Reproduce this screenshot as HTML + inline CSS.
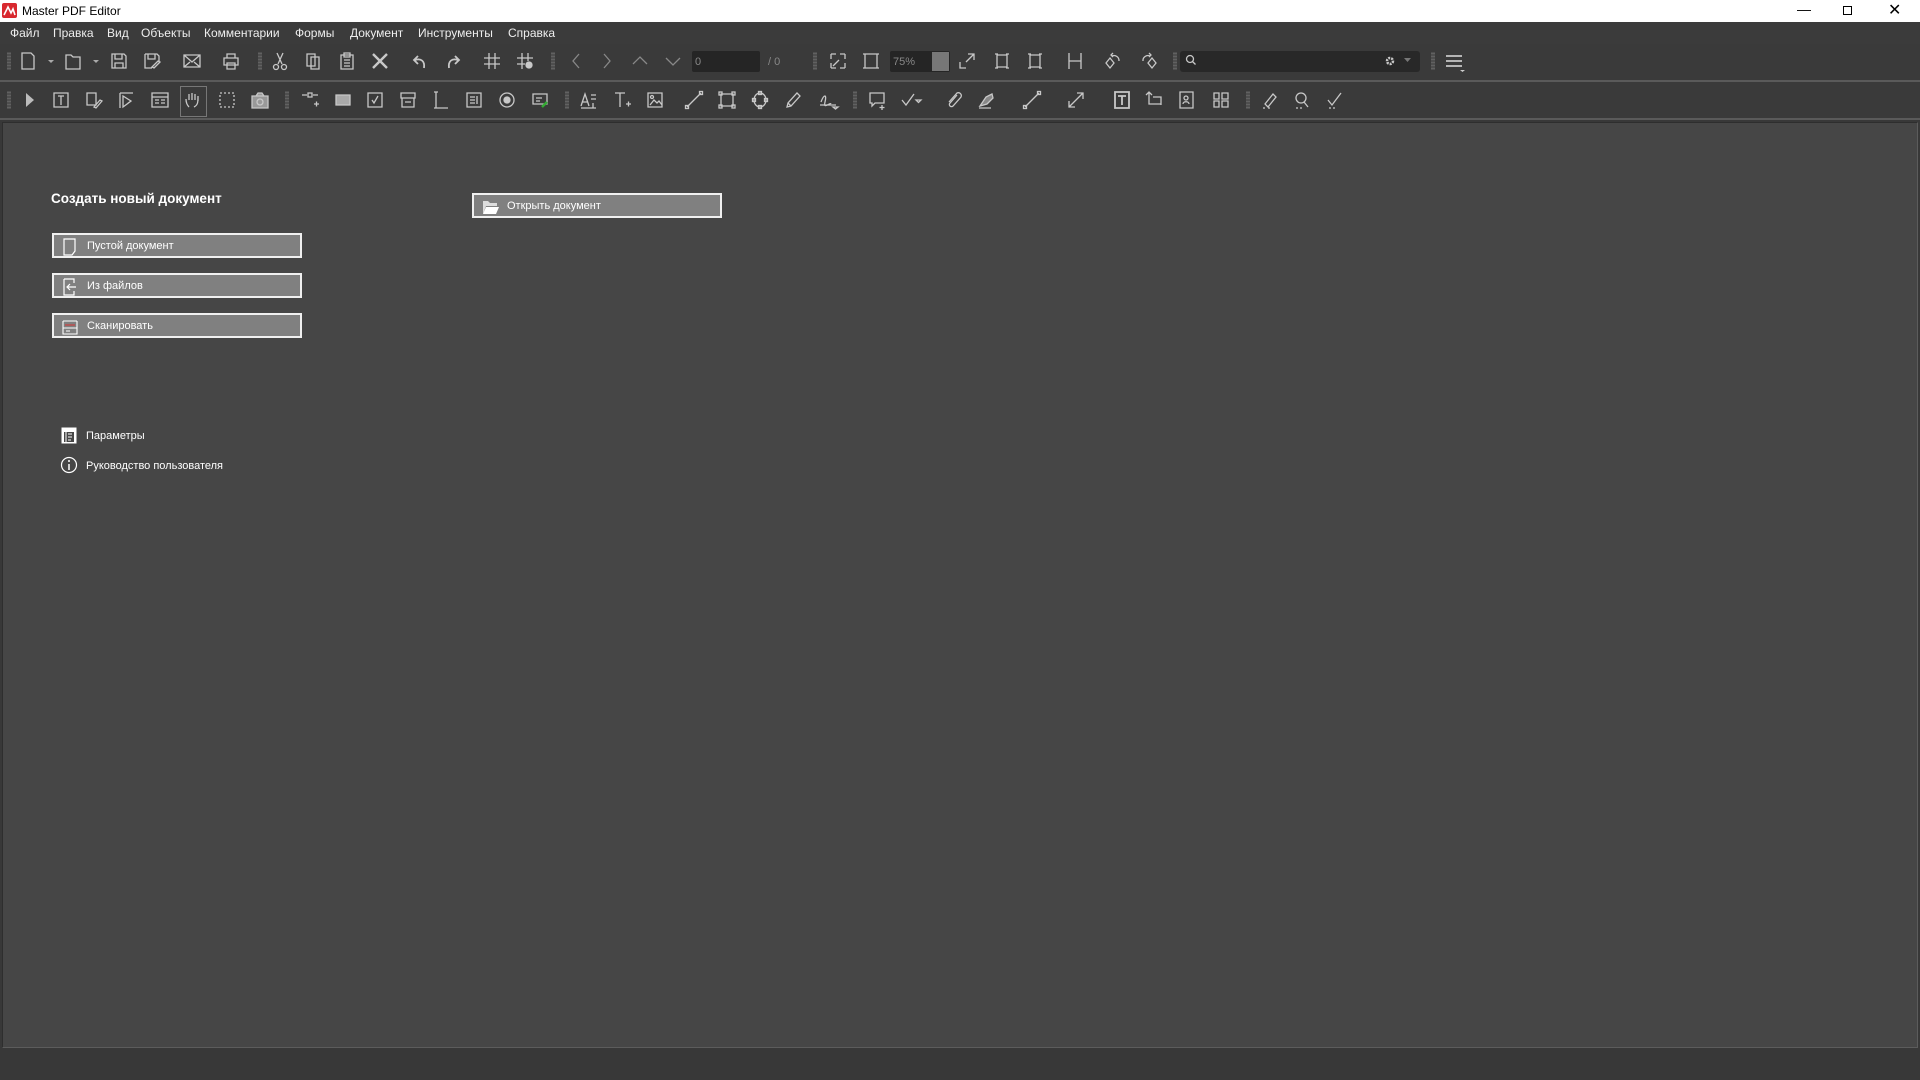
<!DOCTYPE html>
<html><head><meta charset="utf-8"><style>
*{margin:0;padding:0;box-sizing:border-box}
body{width:1920px;height:1080px;background:#383838;font-family:"Liberation Sans","DejaVu Sans",sans-serif;position:relative;overflow:hidden;color:#e6e6e6}
.a{position:absolute}
#title{left:0;top:0;width:1920px;height:22px;background:#fff;color:#000;font-size:12px}
#menu{left:0;top:22px;width:1920px;height:22px;background:#3b3b3b;font-size:12px;color:#eee}
#menu span{position:absolute;top:4px}
.tb{left:0;width:1920px;background:#3a3a3a;border-bottom:2px solid #5a5a5a}
.grip{width:4px;height:18px;background-image:radial-gradient(#888 45%,transparent 50%);background-size:2px 3px}
svg.i{position:absolute;width:20px;height:20px;overflow:visible}
svg.i *{fill:none;stroke:#c8c8c8;stroke-width:1.3}
#main{left:2px;top:122px;width:1916px;height:926px;background:#464646;border:1px solid #5c5c5c;border-top-color:#2e2e2e;border-left-color:#2e2e2e}
.btn{position:absolute;width:250px;height:25px;background:#808080;border:2px solid #f0f0f0;font-size:11px;color:#fff}
.btn span{position:absolute;left:33px;top:5px}
.btn svg{position:absolute;left:8px;top:3px}
.lnk{position:absolute;font-size:11px;color:#fff}
</style></head><body>
<div id="title" class="a">
<div class="a" style="left:2px;top:3px;width:15px;height:15px;background:#d8292f;border-radius:2px"></div>
<svg class="a" style="left:3px;top:5px" width="13" height="11"><path d="M1 10 L5 2 L8 8 L10 4 L12 10" stroke="#fff" stroke-width="1.6" fill="none"/></svg>
<span class="a" style="left:22px;top:4px">Master PDF Editor</span>
<span class="a" style="left:1797px;top:1px;font-size:14px">&#8212;</span>
<div class="a" style="left:1843px;top:6px;width:9px;height:9px;border:1px solid #000"></div>
<span class="a" style="left:1888px;top:0px;font-size:16px">&#10005;</span>
</div>
<div id="menu" class="a">
<span style="left:10px">Файл</span><span style="left:53px">Правка</span><span style="left:107px">Вид</span><span style="left:141px">Объекты</span><span style="left:204px">Комментарии</span><span style="left:295px">Формы</span><span style="left:350px">Документ</span><span style="left:418px">Инструменты</span><span style="left:508px">Справка</span>
</div>
<div class="a tb" style="top:44px;height:38px"></div>
<div class="a tb" style="top:82px;height:38px"></div>
<div class="a grip" style="left:7px;top:52px"></div><div class="a grip" style="left:258px;top:52px"></div><div class="a grip" style="left:551px;top:52px"></div><div class="a grip" style="left:813px;top:52px"></div><div class="a grip" style="left:1173px;top:52px"></div><div class="a grip" style="left:1431px;top:52px"></div>
<div class="a grip" style="left:7px;top:91px"></div><div class="a grip" style="left:285px;top:91px"></div><div class="a grip" style="left:565px;top:91px"></div><div class="a grip" style="left:853px;top:91px"></div><div class="a grip" style="left:1246px;top:91px"></div>
<svg class="i" style="left:18px;top:51px"><path d="M4 2h9l3 3v13H4z" stroke="#fff"/></svg>
<svg class="i" style="left:45px;top:51px"><path d="M3 9h6l-3 3z" style="fill:#aaa;stroke:none"/></svg>
<svg class="i" style="left:63px;top:51px"><path d="M3 4h5l2 2h7v12H3z" stroke="#fff"/></svg>
<svg class="i" style="left:90px;top:51px"><path d="M3 9h6l-3 3z" style="fill:#aaa;stroke:none"/></svg>
<svg class="i" style="left:109px;top:51px"><path d="M3 3h12l2 2v12H3zM6 3v5h7V3M6 17v-5h8v5"/></svg>
<svg class="i" style="left:142px;top:51px"><path d="M3 3h12l2 2v5M3 3v14h7M6 3v5h7V3M12 17l6-6-2-1-6 6z"/></svg>
<svg class="i" style="left:182px;top:51px"><path d="M2 4h16v12H2zM2 4l8 7 8-7M2 16l6-5M18 16l-6-5"/></svg>
<svg class="i" style="left:221px;top:51px"><path d="M6 3h8v4H6zM3 7h14v7H3zM6 12h8v6H6z"/></svg>
<svg class="i" style="left:270px;top:51px"><path d="M7 2l5 11M13 2L8 13"/><circle cx="6" cy="16" r="2.5"/><circle cx="14" cy="16" r="2.5"/></svg>
<svg class="i" style="left:303px;top:51px"><path d="M4 3h8v12H4zM8 6h8v12H8z"/></svg>
<svg class="i" style="left:337px;top:51px"><path d="M4 4h12v14H4zM7 2h6v4H7zM7 9h6M7 12h6M7 15h6"/></svg>
<svg class="i" style="left:370px;top:51px"><path d="M3 3l14 14M17 3L3 17" style="stroke-width:2.4"/></svg>
<svg class="i" style="left:410px;top:51px"><path d="M14 17c1-7-3-10-9-8M8 5L4 9l4 4" style="stroke-width:1.8"/></svg>
<svg class="i" style="left:443px;top:51px"><path d="M6 17c-1-7 3-10 9-8M12 5l4 4-4 4" style="stroke-width:1.8"/></svg>
<svg class="i" style="left:482px;top:51px"><path d="M7 2v16M13 2v16M2 7h16M2 13h16"/></svg>
<svg class="i" style="left:515px;top:51px"><path d="M7 2v16M13 2v8M2 7h16M2 13h8"/><circle cx="14" cy="14" r="3" style="fill:#c8c8c8"/></svg>
<svg class="i" style="left:566px;top:51px"><path d="M13 3l-6 7 6 7" style="stroke:#888"/></svg>
<svg class="i" style="left:597px;top:51px"><path d="M7 3l6 7-6 7" style="stroke:#888"/></svg>
<svg class="i" style="left:630px;top:51px"><path d="M3 13l7-7 7 7" style="stroke:#888"/></svg>
<svg class="i" style="left:663px;top:51px"><path d="M3 7l7 7 7-7" style="stroke:#888"/></svg>
<div class="a" style="left:692px;top:51px;width:68px;height:21px;background:#252525;border-radius:2px;font-size:11px;color:#888;padding:5px 3px">0</div>
<span class="a" style="left:768px;top:56px;font-size:11px;color:#888">/ 0</span>
<svg class="i" style="left:828px;top:51px"><path d="M3 3h5M3 3v5M17 3h-5M17 3v5M3 17h5M3 17v-5M17 17h-5M17 17v-5M5 15l6-6"/></svg>
<svg class="i" style="left:861px;top:51px"><path d="M4 3h12v14H4zM2 3h4M2 17h4M14 3h4M14 17h4"/></svg>
<div class="a" style="left:890px;top:51px;width:60px;height:21px;background:#252525;border-radius:2px;font-size:11px;color:#888;padding:5px 3px">75%</div>
<div class="a" style="left:932px;top:52px;width:17px;height:19px;background:#777"></div>
<svg class="i" style="left:957px;top:51px"><path d="M3 11v6h6M11 3h6v6M9 11l8-8"/></svg>
<svg class="i" style="left:992px;top:51px"><path d="M5 4h10v12H5zM3 3h3M3 17h3M14 3h3M14 17h3"/></svg>
<svg class="i" style="left:1025px;top:51px"><path d="M5 4h10v12H5zM3 3h3M3 17h3M14 3h3M14 17h3"/></svg>
<svg class="i" style="left:1065px;top:51px"><path d="M4 2v16M16 2v16M4 10h12"/></svg>
<svg class="i" style="left:1103px;top:51px"><path d="M3 12l4-5 4 5-4 5zM9 5a5 5 0 0 1 7 5M10 2L8 4l2 2"/></svg>
<svg class="i" style="left:1139px;top:51px"><path d="M9 12l4-5 4 5-4 5zM11 5a5 5 0 0 0-7 5M10 2l2 2-2 2"/></svg>
<div class="a" style="left:1180px;top:51px;width:240px;height:21px;background:#282828;border-radius:3px"></div>
<svg class="i" style="left:1184px;top:53px;width:16px;height:16px"><circle cx="6" cy="6" r="3.5"/><path d="M8.5 8.5l3 3"/></svg>
<svg class="i" style="left:1382px;top:53px;width:16px;height:16px"><circle cx="8" cy="8" r="3" style="stroke-width:2.5;stroke-dasharray:2 1"/></svg>
<svg class="i" style="left:1403px;top:56px;width:10px;height:10px"><path d="M1 2h7l-3.5 4z" style="fill:#777;stroke:none"/></svg>
<svg class="i" style="left:1444px;top:51px"><path d="M2 5h16M2 10h16M2 15h16" style="stroke:#fff"/><path d="M16 19h5l-2.5 2z" style="fill:#ccc;stroke:none"/></svg>
<svg class="i" style="left:20px;top:90px"><path d="M6 3v14l8-7z" style="fill:#bbb;stroke:none"/></svg>
<svg class="i" style="left:51px;top:90px"><path d="M3 3h14v14H3zM7 6h6M10 6v9M3 3v14"/></svg>
<svg class="i" style="left:84px;top:90px"><path d="M3 3h9v12H3zM10 17l6-7 2 1-6 7z"/></svg>
<svg class="i" style="left:117px;top:90px"><path d="M3 3v15M3 3h13M6 6v11l8-6z"/></svg>
<svg class="i" style="left:150px;top:90px"><path d="M2 3h16v14H2zM2 7h16M5 10h4M11 10h4M5 13h4M11 13h4"/></svg>
<div class="a" style="left:180px;top:86px;width:27px;height:31px;border:1px solid #777"></div>
<svg class="i" style="left:183px;top:90px"><path d="M6 17c-3-3-3-6-3-8M6 10V4M9 10V3M12 10V4M15 11V6c0 6 0 9-4 11"/></svg>
<svg class="i" style="left:217px;top:90px"><path d="M3 3h14v14H3z" style="stroke-dasharray:2 2"/></svg>
<svg class="i" style="left:250px;top:90px"><path d="M2 6h16v12H2zM6 6l2-3h4l2 3" style="fill:#999"/><circle cx="10" cy="12" r="3"/></svg>
<svg class="i" style="left:300px;top:90px"><path d="M2 5h5M13 5h5M8 3h4v4H8zM14 14h5M16.5 11.5v5"/></svg>
<svg class="i" style="left:333px;top:90px"><path d="M3 5h14v10H3z" style="fill:#aaa"/></svg>
<svg class="i" style="left:365px;top:90px"><path d="M3 3h14v14H3zM7 10l2 3 4-7"/></svg>
<svg class="i" style="left:398px;top:90px"><path d="M3 3h14v5H3zM4 8v9h12V8M7 12h6"/></svg>
<svg class="i" style="left:431px;top:90px"><path d="M5 2v16h12M3 2h4M3 18h4"/></svg>
<svg class="i" style="left:464px;top:90px"><path d="M3 3h14v14H3zM6 7h5M6 10h5M6 13h5M13 6v8"/></svg>
<svg class="i" style="left:497px;top:90px"><circle cx="10" cy="10" r="7"/><circle cx="10" cy="10" r="3" style="fill:#c8c8c8"/></svg>
<svg class="i" style="left:530px;top:90px"><path d="M3 4h14v10H3zM6 8h6M6 11h4"/><path d="M12 17l5-5" style="stroke:#3a3;stroke-width:2.5"/></svg>
<svg class="i" style="left:578px;top:90px"><path d="M3 16l4-12 4 12M4 12h6M13 5h5M13 9h5M3 18h15M15 13v5"/></svg>
<svg class="i" style="left:612px;top:90px"><path d="M3 3h10M8 3v14M14 14h5M16.5 11.5v5"/></svg>
<svg class="i" style="left:645px;top:90px"><path d="M3 3h14v14H3zM5 15l4-5 3 3 2-2 3 4"/><circle cx="7" cy="7" r="1.5"/></svg>
<svg class="i" style="left:684px;top:90px"><path d="M3 17L17 3"/><rect x="1.5" y="15.5" width="3" height="3"/><rect x="15.5" y="1.5" width="3" height="3"/></svg>
<svg class="i" style="left:717px;top:90px"><path d="M4 4h12v12H4z"/><rect x="2" y="2" width="3" height="3"/><rect x="15" y="2" width="3" height="3"/><rect x="2" y="15" width="3" height="3"/><rect x="15" y="15" width="3" height="3"/></svg>
<svg class="i" style="left:750px;top:90px"><ellipse cx="10" cy="10" rx="6" ry="7"/><rect x="8.5" y="1.5" width="3" height="3"/><rect x="8.5" y="15.5" width="3" height="3"/><rect x="2.5" y="8.5" width="3" height="3"/><rect x="14.5" y="8.5" width="3" height="3"/></svg>
<svg class="i" style="left:783px;top:90px"><path d="M4 17l1-4 9-10 3 3-9 10zM5 13l3 3"/></svg>
<svg class="i" style="left:818px;top:90px"><path d="M3 12c3-8 6-8 4 0s5 0 6 2M2 15h16M15 17h5l-2.5 2z"/></svg>
<svg class="i" style="left:867px;top:90px"><path d="M3 3h14v10H8l-3 3v-3H3zM15 15v5M12.5 17.5h5"/></svg>
<svg class="i" style="left:899px;top:90px"><path d="M3 10l4 5 8-11M17 10h5l-2.5 2.5z"/></svg>
<svg class="i" style="left:944px;top:90px"><path d="M13 5l-7 8a2 2 0 0 0 3 3l8-9a3 3 0 0 0-4-4L5 12"/></svg>
<svg class="i" style="left:977px;top:90px"><path d="M3 16l6-9 6-3 1 4-6 6zM2 18h12" style="fill:#888"/></svg>
<svg class="i" style="left:1022px;top:90px"><path d="M3 17L17 3"/><rect x="1.5" y="15.5" width="3" height="3"/><rect x="15.5" y="1.5" width="3" height="3"/></svg>
<svg class="i" style="left:1066px;top:90px"><path d="M3 17L17 3M11 3h6v6M3 11v6h6"/></svg>
<svg class="i" style="left:1112px;top:90px"><path d="M3 2h14v16H3zM6 6h8M10 6v9" style="stroke-width:1.8"/></svg>
<svg class="i" style="left:1145px;top:90px"><path d="M4 2v12h12M1 5l3-3 3 3M8 7h8v8"/></svg>
<svg class="i" style="left:1177px;top:90px"><path d="M3 2h13v16H3z"/><circle cx="9" cy="8" r="2"/><path d="M6 14c0-3 6-3 6 0"/></svg>
<svg class="i" style="left:1211px;top:90px"><path d="M3 3h5v6H3zM11 3h6v6h-6zM3 11h5v6H3zM11 11h6v6h-6z"/></svg>
<svg class="i" style="left:1260px;top:90px"><path d="M5 14l8-10 3 3-8 10zM3 18h2M8 18h2"/></svg>
<svg class="i" style="left:1292px;top:90px"><circle cx="9" cy="8" r="5"/><path d="M12 12l4 5M4 18h2M8 18h2"/></svg>
<svg class="i" style="left:1325px;top:90px"><path d="M3 10l4 5 9-12M4 18h2M8 18h2"/></svg>
<div id="main" class="a"></div>
<div class="a" style="left:51px;top:191px;font-size:13.5px;font-weight:bold;color:#fff">Создать новый документ</div>
<div class="btn" style="left:52px;top:233px"><svg width="16" height="18"><path d="M2 1h11v12l-3 4H2z" stroke="#fff" fill="none" stroke-width="1.2"/></svg><span>Пустой документ</span></div>
<div class="btn" style="left:52px;top:273px"><svg width="16" height="18"><path d="M2 1h10v4M2 1v16h10v-4M14 9H6M8 6L5 9l3 3" stroke="#fff" fill="none" stroke-width="1.2"/></svg><span>Из файлов</span></div>
<div class="btn" style="left:52px;top:313px"><svg width="16" height="18"><path d="M1 3h14M1 3v13h14V3M1 10h14M4 13h4" stroke="#fff" fill="none" stroke-width="1.1"/><path d="M3 7h10" stroke="#d33" stroke-width="1"/></svg><span>Сканировать</span></div>
<div class="btn" style="left:472px;top:193px"><svg width="18" height="18"><path d="M1 3h5l2 2h7v3H4L1 16z" fill="#ddd"/><path d="M4 9h13l-3 7H1z" fill="#fff"/></svg><span>Открыть документ</span></div>
<svg class="a" style="left:61px;top:427px" width="16" height="17"><rect x="0.5" y="0.5" width="15" height="16" fill="#fff"/><rect x="3" y="5" width="10" height="10" fill="#464646"/><path d="M5 5v10M7 7h4M7 10h4M7 13h3" stroke="#fff" stroke-width="1"/></svg>
<span class="lnk" style="left:86px;top:430px">Параметры</span>
<svg class="a" style="left:60px;top:456px" width="18" height="18"><circle cx="9" cy="9" r="7.5" stroke="#fff" fill="none" stroke-width="1.2"/><path d="M9 8v6" stroke="#fff" stroke-width="1.5"/><circle cx="9" cy="5" r="1" fill="#fff"/></svg>
<span class="lnk" style="left:86px;top:460px">Руководство пользователя</span>
</body></html>
